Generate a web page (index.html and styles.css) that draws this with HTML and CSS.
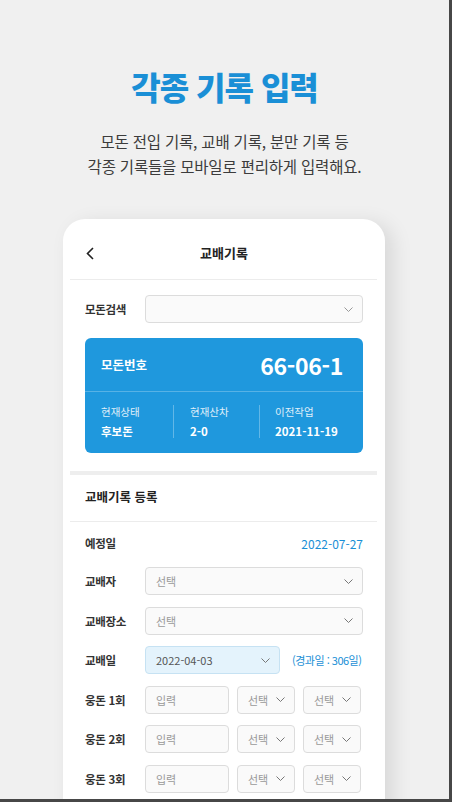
FILE: index.html
```html
<!DOCTYPE html>
<html lang="ko">
<head>
  <meta charset="UTF-8">
  <meta name="viewport" content="width=device-width, initial-scale=1.0">
  <title>각종 기록 입력</title>
  <link rel="stylesheet" href="styles.css">
</head>
<body>
  <div class="page">
    <div class="hero">
      <h1 class="hero-title">각종 기록 입력</h1>
      <p class="hero-desc">모돈 전입 기록, 교배 기록, 분만 기록 등<br>각종 기록들을 모바일로 편리하게 입력해요.</p>
    </div>

    <div class="phone">
      <div class="phone-head">
        <svg class="back" width="8" height="13" viewBox="0 0 8 13"><polyline points="7,1 1.5,6.5 7,12" fill="none" stroke="#222" stroke-width="1.6"/></svg>
        <span class="phone-title">교배기록</span>
        <span></span>
      </div>

      <div class="block">
        <div class="row">
          <span class="label">모돈검색</span>
          <div class="select"><span></span><svg class="chev" width="9" height="5" viewBox="0 0 9 5"><polyline points="0.5,0.5 4.5,4.5 8.5,0.5" fill="none" stroke="#999" stroke-width="1"/></svg></div>
        </div>

        <div class="sow-card">
          <div class="sow-top">
            <span class="sow-label">모돈번호</span>
            <span class="sow-no">66-06-1</span>
          </div>
          <div class="sow-info">
            <div class="info-col">
              <div class="info-label">현재상태</div>
              <div class="info-value">후보돈</div>
            </div>
            <div class="info-col">
              <div class="info-label">현재산차</div>
              <div class="info-value">2-0</div>
            </div>
            <div class="info-col">
              <div class="info-label">이전작업</div>
              <div class="info-value">2021-11-19</div>
            </div>
          </div>
        </div>
      </div>

      <div class="band"></div>

      <div class="section-head">교배기록 등록</div>

      <div class="form">
        <div class="row row-text">
          <span class="label">예정일</span>
          <span class="due">2022-07-27</span>
        </div>
        <div class="row">
          <span class="label">교배자</span>
          <div class="select"><span class="ph">선택</span><svg class="chev" width="9" height="5" viewBox="0 0 9 5"><polyline points="0.5,0.5 4.5,4.5 8.5,0.5" fill="none" stroke="#777" stroke-width="1"/></svg></div>
        </div>
        <div class="row">
          <span class="label">교배장소</span>
          <div class="select"><span class="ph">선택</span><svg class="chev" width="9" height="5" viewBox="0 0 9 5"><polyline points="0.5,0.5 4.5,4.5 8.5,0.5" fill="none" stroke="#777" stroke-width="1"/></svg></div>
        </div>
        <div class="row">
          <span class="label">교배일</span>
          <div class="select select-date"><span class="val">2022-04-03</span><svg class="chev" width="9" height="5" viewBox="0 0 9 5"><polyline points="0.5,0.5 4.5,4.5 8.5,0.5" fill="none" stroke="#777" stroke-width="1"/></svg></div>
          <span class="elapsed">(경과일 : 306일)</span>
        </div>
        <div class="row">
          <span class="label">웅돈 1회</span>
          <div class="input">입력</div>
          <div class="select select-sm"><span class="ph">선택</span><svg class="chev" width="9" height="5" viewBox="0 0 9 5"><polyline points="0.5,0.5 4.5,4.5 8.5,0.5" fill="none" stroke="#777" stroke-width="1"/></svg></div>
          <div class="select select-sm"><span class="ph">선택</span><svg class="chev" width="9" height="5" viewBox="0 0 9 5"><polyline points="0.5,0.5 4.5,4.5 8.5,0.5" fill="none" stroke="#777" stroke-width="1"/></svg></div>
        </div>
        <div class="row">
          <span class="label">웅돈 2회</span>
          <div class="input">입력</div>
          <div class="select select-sm"><span class="ph">선택</span><svg class="chev" width="9" height="5" viewBox="0 0 9 5"><polyline points="0.5,0.5 4.5,4.5 8.5,0.5" fill="none" stroke="#777" stroke-width="1"/></svg></div>
          <div class="select select-sm"><span class="ph">선택</span><svg class="chev" width="9" height="5" viewBox="0 0 9 5"><polyline points="0.5,0.5 4.5,4.5 8.5,0.5" fill="none" stroke="#777" stroke-width="1"/></svg></div>
        </div>
        <div class="row">
          <span class="label">웅돈 3회</span>
          <div class="input">입력</div>
          <div class="select select-sm"><span class="ph">선택</span><svg class="chev" width="9" height="5" viewBox="0 0 9 5"><polyline points="0.5,0.5 4.5,4.5 8.5,0.5" fill="none" stroke="#777" stroke-width="1"/></svg></div>
          <div class="select select-sm"><span class="ph">선택</span><svg class="chev" width="9" height="5" viewBox="0 0 9 5"><polyline points="0.5,0.5 4.5,4.5 8.5,0.5" fill="none" stroke="#777" stroke-width="1"/></svg></div>
        </div>
      </div>
    </div>
  </div>
</body>
</html>
```

FILE: styles.css
```css
body {
  margin: 0;
  background: #474747;
  font-family: "Noto Sans CJK KR", "Noto Sans", sans-serif;
}
.page {
  width: 449px;
  height: 799px;
  background: #f0f0f0;
  overflow: hidden;
}
.hero {
  padding-top: 63px;
  text-align: center;
}
.hero-title {
  margin: 0;
  font-size: 32px;
  line-height: 46px;
  font-weight: 900;
  color: #1a8fd6;
  letter-spacing: -1px;
}
.hero-desc {
  margin: 20px 0 0;
  font-size: 15.5px;
  line-height: 25px;
  color: #3c3c3c;
  letter-spacing: -0.2px;
}
.phone {
  box-sizing: border-box;
  width: 322px;
  height: 600px;
  margin: 40px 0 0 63px;
  padding: 0 8px 0 7px;
  background: #fff;
  border-radius: 22px 22px 0 0;
  box-shadow: 8px 4px 20px rgba(0, 0, 0, 0.1);
}
.phone-head {
  display: grid;
  grid-template-columns: 20px 1fr 20px;
  align-items: center;
  padding: 24px 15px 16px 16px;
  border-bottom: 1px solid #ececec;
}
.phone-title {
  text-align: center;
  font-size: 13px;
  line-height: 20px;
  font-weight: 700;
  color: #222;
}
.block {
  padding: 15px 14px 18px 15px;
}
.row {
  display: flex;
  align-items: center;
  gap: 8px;
  height: 28px;
}
.label {
  width: 52px;
  flex: none;
  font-size: 11.5px;
  font-weight: 700;
  color: #333;
  letter-spacing: -0.3px;
  white-space: nowrap;
}
.select {
  box-sizing: border-box;
  flex: 1;
  height: 28px;
  display: flex;
  align-items: center;
  justify-content: space-between;
  padding: 0 9px 0 10px;
  background: #fafafa;
  border: 1px solid #dcdcdc;
  border-radius: 4px;
  font-size: 11px;
}
.ph {
  color: #999;
}
.val {
  color: #555;
}
.chev {
  flex: none;
}
.sow-card {
  margin-top: 15px;
  background: #1f98dd;
  border-radius: 6px;
  color: #fff;
}
.sow-top {
  display: flex;
  justify-content: space-between;
  align-items: center;
  height: 53px;
  padding: 0 20px 0 16px;
  border-bottom: 1px solid rgba(255, 255, 255, 0.25);
}
.sow-label {
  font-size: 12.5px;
  font-weight: 700;
}
.sow-no {
  font-size: 23px;
  font-weight: 700;
  letter-spacing: -0.3px;
}
.sow-info {
  display: grid;
  grid-template-columns: 88px 86px 1fr;
  padding: 13px 0 15px;
}
.info-col {
  padding-left: 16px;
}
.info-col + .info-col {
  border-left: 1px solid rgba(255, 255, 255, 0.3);
}
.info-col:last-child {
  padding-left: 15px;
}
.info-label {
  font-size: 10.5px;
  line-height: 13px;
  opacity: 0.85;
}
.info-value {
  margin-top: 6px;
  font-size: 11.5px;
  line-height: 14px;
  font-weight: 700;
}
.band {
  height: 4px;
  background: #eeeeee;
}
.section-head {
  padding: 12px 15px 14px;
  font-size: 12.5px;
  line-height: 20px;
  font-weight: 700;
  color: #222;
  border-bottom: 1px solid #ececec;
}
.form {
  display: flex;
  flex-direction: column;
  gap: 11.5px;
  padding: 11px 14px 0 15px;
}
.row-text {
  height: 20px;
  justify-content: space-between;
  margin-bottom: 2.5px;
}
.due {
  font-size: 12px;
  color: #1a8fd6;
}
.select-date {
  flex: none;
  width: 135px;
  background: #e4f3fc;
  border-color: #c6e2f3;
}
.elapsed {
  margin-left: 4px;
  font-size: 11px;
  color: #1a8fd6;
  letter-spacing: -0.5px;
  white-space: nowrap;
}
.input {
  box-sizing: border-box;
  width: 84px;
  flex: none;
  height: 28px;
  display: flex;
  align-items: center;
  padding: 0 10px;
  background: #fafafa;
  border: 1px solid #dcdcdc;
  border-radius: 4px;
  font-size: 11px;
  color: #999;
}
.select-sm {
  flex: none;
  width: 58px;
}
```
